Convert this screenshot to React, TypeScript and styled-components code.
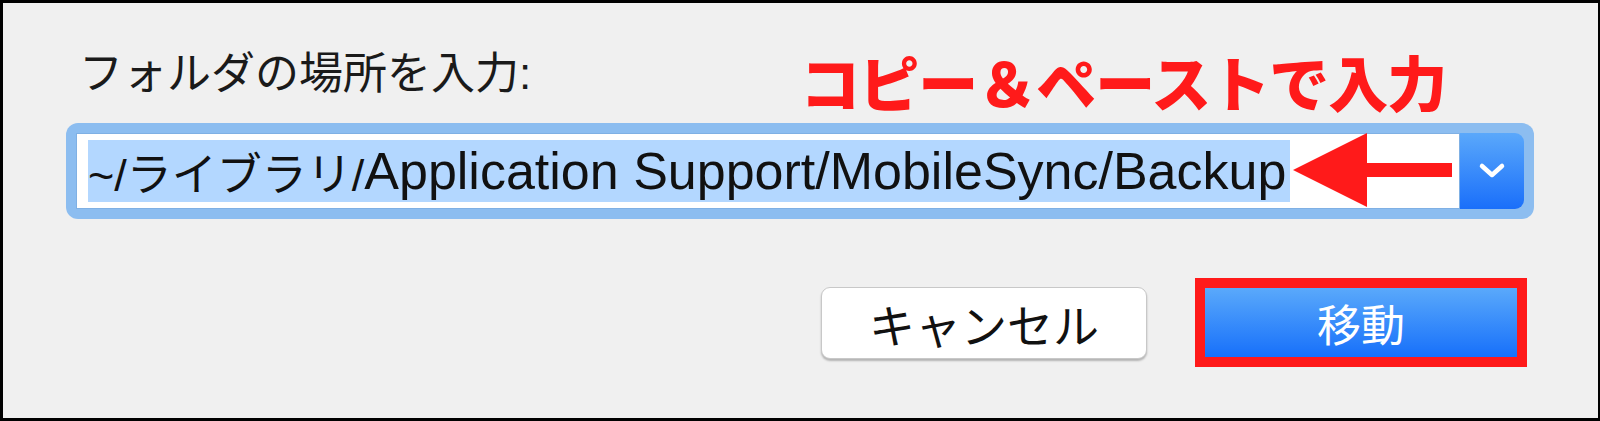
import React from 'react'
import styled, { createGlobalStyle } from 'styled-components'

const GlobalStyle = createGlobalStyle`
  html, body {
    margin: 0;
    padding: 0;
    background: #f0f0f0;
  }
  * {
    box-sizing: border-box;
  }
`

const jp = `"Liberation Sans", "Noto Sans CJK JP", sans-serif`

export default function App() {
  return (
    <>
      <GlobalStyle />
      <StyledFrame>
        <Header>
          <Label>フォルダの場所を入力:</Label>
          <Annotation>コピー＆ペーストで入力</Annotation>
        </Header>
        <FocusRing>
          <Field>
            <Selected>
              <Kana>~/ライブラリ/</Kana>Application Support/MobileSync/Backup
            </Selected>
          </Field>
          <DropButton>
            <svg width="28" height="18" viewBox="0 0 28 18">
              <path d="M4 4 L14 13 L24 4" fill="none" stroke="#fff" strokeWidth="4.5" strokeLinecap="round" strokeLinejoin="round" />
            </svg>
          </DropButton>
          <Arrow width="160" height="76" viewBox="0 0 160 76">
            <polygon points="0,37 74,0 74,30 159,30 159,44 74,44 74,74" fill="#ff1a1a" />
          </Arrow>
        </FocusRing>
        <Actions>
          <CancelButton>キャンセル</CancelButton>
          <Highlight>
            <PrimaryButton>移動</PrimaryButton>
          </Highlight>
        </Actions>
      </StyledFrame>
    </>
  )
}

const StyledFrame = styled.div`
  width: 1600px;
  height: 421px;
  border: 3px solid #000;
  border-right-width: 2px;
  padding: 0 64px 0 63px;
  display: flex;
  flex-direction: column;
  font-family: ${jp};
`

const Header = styled.div`
  display: flex;
  align-items: flex-end;
  height: 120px;
  padding-bottom: 10px;
`

const Label = styled.div`
  font-size: 44px;
  line-height: 1;
  color: #1a1a1a;
  margin-left: 13px;
  padding-bottom: 17px;
`

const Annotation = styled.div`
  font-size: 60px;
  font-weight: 900;
  line-height: 1;
  color: #ff1a1a;
  margin-left: 269px;
  margin-bottom: -4px;
  letter-spacing: -1px;
`

const FocusRing = styled.div`
  position: relative;
  display: flex;
  height: 96px;
  padding: 10px;
  border-radius: 12px;
  background: #8cbdf0;
`

const Field = styled.div`
  flex: 1;
  display: flex;
  align-items: center;
  background: #fff;
  border: 1px solid #7fb0e4;
  padding: 0 0 0 11px;
`

const Selected = styled.span`
  display: inline-flex;
  align-items: center;
  height: 62px;
  padding-right: 4px;
  background: #b3d7ff;
  font-size: 52px;
  color: #111;
  white-space: nowrap;
`

const Kana = styled.span`
  font-size: 45px;
`

const DropButton = styled.div`
  width: 64px;
  display: flex;
  align-items: center;
  justify-content: center;
  border-radius: 0 9px 9px 0;
  background: linear-gradient(#5aa8fb, #1a6ffa);
`

const Arrow = styled.svg`
  position: absolute;
  left: 1227px;
  top: 10px;
`

const Actions = styled.div`
  display: flex;
  justify-content: flex-end;
  align-items: center;
  gap: 48px;
  margin-top: 59px;
  padding-right: 7px;
`

const CancelButton = styled.div`
  width: 326px;
  height: 72px;
  display: flex;
  align-items: center;
  justify-content: center;
  background: #fff;
  border-radius: 9px;
  border: 1px solid #c8c8c8;
  box-shadow: 0 2px 2px rgba(0, 0, 0, 0.25);
  font-size: 46px;
  color: #111;
`

const Highlight = styled.div`
  border: 10px solid #ff1a1a;
`

const PrimaryButton = styled.div`
  width: 312px;
  height: 69px;
  display: flex;
  align-items: center;
  justify-content: center;
  background: linear-gradient(#5aa9fb, #1770fa);
  font-size: 44px;
  color: #fff;
`
